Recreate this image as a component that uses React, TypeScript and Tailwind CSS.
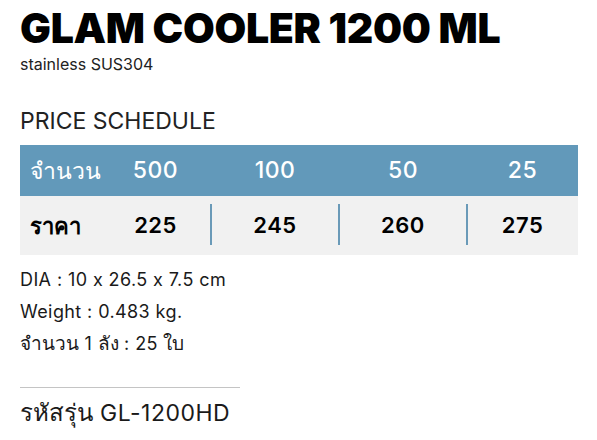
import React from "react";

export default function App() {
  const qty = ["500", "100", "50", "25"];
  const price = ["225", "245", "260", "275"];
  return (
    <div className="w-[597px] h-[440px] bg-white text-black overflow-hidden font-['Inter','Noto_Sans',sans-serif] [font-feature-settings:'calt'_0]">
      <div className="pl-[20px] pr-[19px] pt-[4px]">
        <h1 className="text-[41px] leading-[48px] font-black tracking-[-0.3px]">GLAM COOLER 1200 ML</h1>
        <div className="text-[16px] leading-[20px] mt-[2px] text-[#222]">stainless SUS304</div>
        <div className="text-[23px] leading-[28px] mt-[33px] text-[#222]">PRICE SCHEDULE</div>
        <div className="mt-[10px]">
          <div className="flex h-[51px] items-center bg-[#6299ba] text-white text-[23px] font-medium">
            <div className="w-[80px] pl-[10px] text-[23px] leading-[30px]">จำนวน</div>
            {qty.map((q, i) => (
              <div key={q} className={(i === 0 ? "w-[111px]" : i === 3 ? "flex-1" : "w-[128px]") + " text-center tracking-[0.5px]"}>{q}</div>
            ))}
          </div>
          <div className="flex h-[59px] items-center bg-[#f1f1f1] text-[22px] font-semibold">
            <div className="w-[80px] pl-[10px] text-[22px] leading-[30px]">ราคา</div>
            {price.map((p, i) => (
              <div key={p} className={(i === 0 ? "w-[111px]" : i === 3 ? "flex-1" : "w-[128px]") + " relative text-center tracking-[0.5px]"}>
                {i > 0 && <div className="absolute left-[-1px] top-[-5px] h-[41px] w-[2px] bg-[#6a9ab8]" />}
                {p}
              </div>
            ))}
          </div>
        </div>
        <div className="mt-[9px] text-[18px] leading-[32px] text-[#1a1a1a] tracking-[0.4px]">
          <div>DIA : 10 x 26.5 x 7.5 cm</div>
          <div>Weight : 0.483 kg.</div>
          <div><span className="text-[19px] tracking-normal">จำนวน</span> 1 <span className="text-[19px] tracking-normal">ลัง</span> : 25 <span className="text-[19px] tracking-normal">ใบ</span></div>
        </div>
        <div className="mt-[27px] w-[220px] h-px bg-[#c4c4c4]" />
        <div className="mt-[11px] text-[23px] leading-[28px] text-[#1a1a1a] tracking-[0.5px]"><span className="text-[24px] tracking-normal">รหัสรุ่น</span> GL-1200HD</div>
      </div>
    </div>
  );
}
